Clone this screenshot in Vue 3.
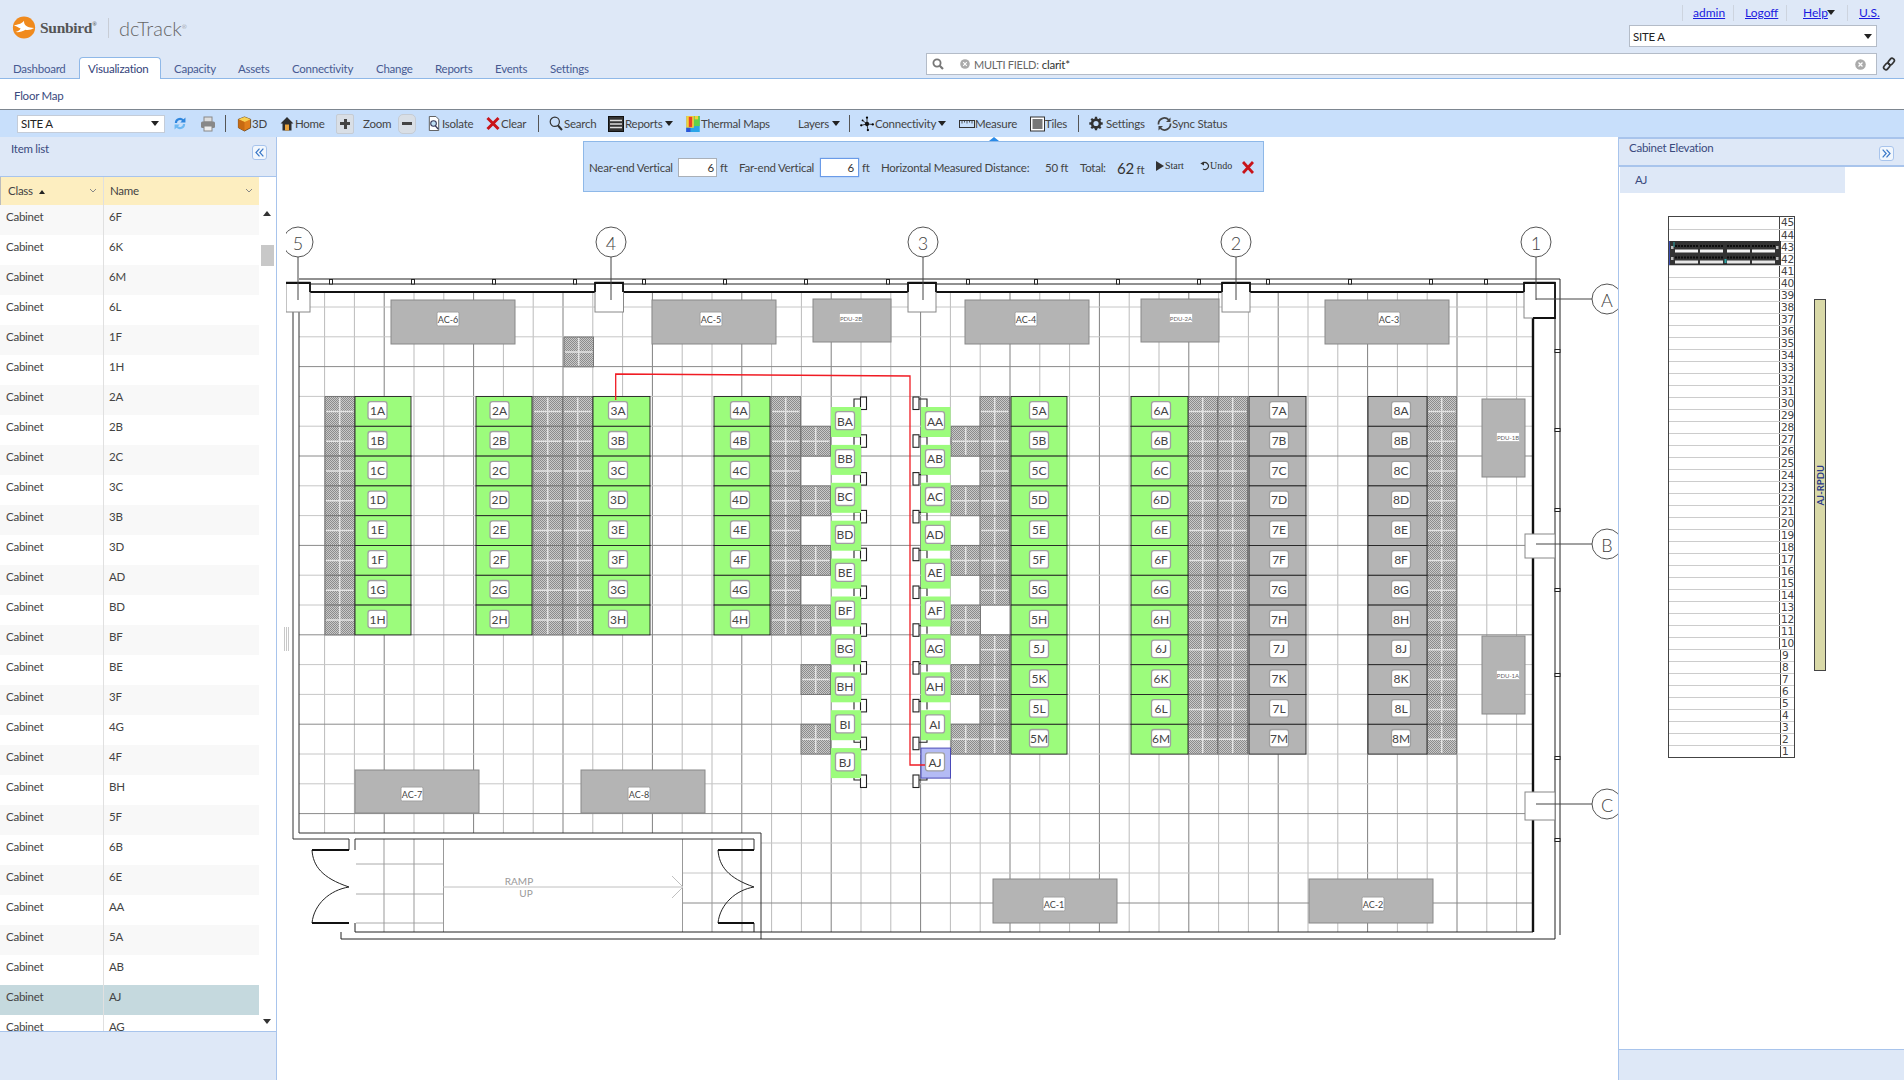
<script setup>
const tabs = ['Dashboard', 'Visualization', 'Capacity', 'Assets', 'Connectivity', 'Change', 'Reports', 'Events', 'Settings']
const items = ['6F','6K','6M','6L','1F','1H','2A','2B','2C','3C','3B','3D','AD','BD','BF','BE','3F','4G','4F','BH','5F','6B','6E','AA','5A','AB','AJ','AG']
const units = Array.from({ length: 45 }, (_, i) => 45 - i)

const vLines = []
for (let i = 0; i <= 40; i++) {
  const x = 324.6 + 29.8 * i
  vLines.push({ x, y2: x < 761 ? 833 : 932, c: i % 3 === 2 ? '#808080' : '#bbb' })
}
const hLines = []
for (let j = 0; j <= 17; j++) {
  hLines.push({ y: 307 + 29.8 * j, x1: 299, c: j % 3 === 2 ? '#8a8a8a' : '#c6c6c6' })
}
hLines.push({ y: 843, x1: 761, c: '#c6c6c6' }, { y: 873, x1: 683, c: '#c6c6c6' }, { y: 903, x1: 683, c: '#8a8a8a' })

const rowY = i => 396.5 + 29.8 * i
const all = n => Array.from({ length: n }, (_, i) => i)
const odd = [1, 3, 5, 7, 9, 11]
const tileCols = [
  [325, all(8)], [533, all(8)], [563, all(8)], [771, all(8)], [801, odd],
  [951, odd], [980, [0, 1, 2, 3, 4, 5, 6, 8, 9, 10, 11]], [1188, all(12)], [1218, all(12)], [1427, all(12)]
]
const tiles = [{ x: 564, y: 337 }]
tileCols.forEach(([x, rows]) => rows.forEach(r => tiles.push({ x, y: rowY(r) })))

const G = '#9cfc7c'
const K = '#b4b4b4'
const long = 'ABCDEFGHJKLM'
const cabinets = []
;[
  [355, 56, 377.5, '1', 'ABCDEFGH', G], [476, 56, 499.5, '2', 'ABCDEFGH', G],
  [593, 57, 618, '3', 'ABCDEFGH', G], [714, 56, 740, '4', 'ABCDEFGH', G],
  [1011, 56, 1039, '5', long, G], [1131, 57, 1161, '6', long, G],
  [1249, 57, 1279, '7', long, K], [1368, 59, 1401, '8', long, K]
].forEach(([x, w, lx, p, names, fill]) => {
  ;[...names].forEach((n, i) => cabinets.push({ x, y: rowY(i), w, lx, name: p + n, fill }))
})
const shortRow = l => [...'ABCDEFGHIJ'].map((n, i) => ({ name: l + n, y: 407 + 37.9 * i }))
const bRow = shortRow('B')
const aRow = shortRow('A')
const stubs = all(11).map(i => 397 + 37.8 * i)

const blocks = [
  { x: 391, y: 300, w: 124, h: 44, lx: 448, ly: 319, t: 'AC-6' },
  { x: 652, y: 300, w: 124, h: 44, lx: 711, ly: 319, t: 'AC-5' },
  { x: 965, y: 300, w: 124, h: 44, lx: 1026, ly: 319, t: 'AC-4' },
  { x: 1325, y: 300, w: 124, h: 44, lx: 1389, ly: 319, t: 'AC-3' },
  { x: 355, y: 770, w: 124, h: 43, lx: 412, ly: 794, t: 'AC-7' },
  { x: 581, y: 770, w: 124, h: 43, lx: 639, ly: 794, t: 'AC-8' },
  { x: 993, y: 879, w: 124, h: 44, lx: 1054, ly: 904, t: 'AC-1' },
  { x: 1309, y: 879, w: 124, h: 44, lx: 1373, ly: 904, t: 'AC-2' }
]
const pdus = [
  { x: 813, y: 299, w: 78, h: 43, lx: 851, ly: 318, t: 'PDU-2B' },
  { x: 1141, y: 299, w: 78, h: 43, lx: 1181, ly: 318, t: 'PDU-2A' },
  { x: 1482, y: 399, w: 43, h: 78, lx: 1508, ly: 437, t: 'PDU-1B' },
  { x: 1482, y: 636, w: 43, h: 78, lx: 1508, ly: 675, t: 'PDU-1A' }
]
const topTicks = [331, 413, 494, 575, 644, 725, 806, 888, 968, 1036, 1118, 1199, 1268, 1350, 1431, 1486]
const sideTicks = [351, 430, 510, 590, 675, 758, 840]
const colBoxes = [
  { x: 286, y: 282, w: 24, h: 30 }, { x: 595, y: 282, w: 28.5, h: 30 },
  { x: 908, y: 282, w: 28, h: 30 }, { x: 1222, y: 282, w: 28, h: 30 },
  { x: 1524, y: 282, w: 31, h: 36 }, { x: 1525, y: 534, w: 30, h: 24 }, { x: 1525, y: 792, w: 30, h: 28 }
]
const columns = [{ x: 298, t: '5' }, { x: 611, t: '4' }, { x: 923, t: '3' }, { x: 1236, t: '2' }, { x: 1536, t: '1' }]
const rowsMarks = [{ y: 299, t: 'A' }, { y: 544, t: 'B' }, { y: 804, t: 'C' }]
const walls = ['310,292 595,292', '623,292 908,292', '936,292 1222,292', '1250,292 1524,292']
</script>

<template>
  <div class="page">
    <header class="top">
      <div class="top-left">
        <div class="brand">
          <svg class="sun" viewBox="0 0 24 24">
            <circle cx="12" cy="12" r="11.6" fill="#f08a1d" />
            <path d="M1.5 9.5C6 9 9 8.5 12 5c0 2.5.5 4 2.5 5.5 2.500 1.500 5 2 8 2-2.500 1.800-6 2.300-9 1.800-3 2-7 3-10.500 2.500 2.500-.8 4.500-2 5.500-3.800C6 12 3.500 11 1.500 9.500z" fill="#fff" />
          </svg>
          <span class="sunbird">Sunbird<sup>®</sup></span>
          <i class="brand-sep"></i>
          <span class="dctrack">dcTrack<sup>®</sup></span>
        </div>
        <nav class="tabs">
          <a v-for="t in tabs" :key="t" class="tab" :class="{ active: t === 'Visualization' }">{{ t }}</a>
        </nav>
      </div>
      <div class="top-right">
        <div class="links">
          <i class="lsep"></i><a class="lnk l1">admin</a><i class="lsep"></i><a class="lnk l2">Logoff</a><i class="lsep"></i><a class="lnk l3">Help</a><b class="caret dark"></b><i class="lsep"></i><a class="lnk l4">U.S.</a>
        </div>
        <div class="site-top"><span>SITE A</span><b class="caret dark"></b></div>
        <div class="search-row">
          <div class="search">
            <svg class="s-ico" viewBox="0 0 12 12"><circle cx="5" cy="5" r="3.600" fill="none" stroke="#777" stroke-width="1.800" /><path d="M7.700 7.700L11 11" stroke="#777" stroke-width="2.200" /></svg>
            <svg class="x-ico" viewBox="0 0 10 10"><circle cx="5" cy="5" r="4.800" fill="#aaa" /><path d="M3.200 3.200l3.600 3.600M6.800 3.200l-3.600 3.600" stroke="#fff" stroke-width="1.100" /></svg>
            <span class="mf">MULTI FIELD:</span><span class="mv">clarit*</span>
            <svg class="x-ico end" viewBox="0 0 10 10"><circle cx="5" cy="5" r="4.800" fill="#aaa" /><path d="M3.200 3.200l3.600 3.600M6.800 3.200l-3.600 3.600" stroke="#fff" stroke-width="1.100" /></svg>
          </div>
          <svg class="link-ico" viewBox="0 0 14 14"><g fill="none" stroke="#333" stroke-width="1.700"><rect x="7" y="1" width="4.500" height="7" rx="2.200" transform="rotate(40 9.200 4.500)" /><rect x="2.500" y="6" width="4.500" height="7" rx="2.200" transform="rotate(40 4.800 9.500)" /></g></svg>
        </div>
      </div>
    </header>

    <div class="subnav">Floor Map</div>

    <div class="toolbar">
      <div class="site-tool"><span>SITE A</span><b class="caret dark"></b></div>
      <div class="tool">
        <svg class="ic14" viewBox="0 0 14 16"><path d="M1.500 7.500A5.500 5.500 0 0 1 10.800 3.500L12.800 1.500V7H7.300L9.200 5.100A3.300 3.300 0 0 0 3.800 7.500z" fill="#2f86de" /><path d="M12.500 8.500A5.500 5.500 0 0 1 3.200 12.500L1.200 14.500V9H6.700L4.800 10.900A3.300 3.300 0 0 0 10.200 8.500z" fill="#6db8f2" /></svg>
      </div>
      <div class="tool">
        <svg class="ic16" viewBox="0 0 16 16"><rect x="4" y="1" width="8" height="5" fill="#ddd" stroke="#888" /><rect x="1" y="5.500" width="14" height="6.500" rx="1.500" fill="#888" /><rect x="4" y="10" width="8" height="5" fill="#eee" stroke="#888" /></svg>
      </div>
      <i class="tsep"></i>
      <div class="tool">
        <svg class="ic15" viewBox="0 0 15 17"><path d="M7.500 1L14 3.500v9L7.500 16 1 12.500v-9z" fill="#e07f1c" stroke="#5a3a10" stroke-width=".8" /><path d="M7.500 1L14 3.500 7.500 6.500 1 3.500z" fill="#f7d154" /><path d="M7.500 6.500V16L1 12.500v-9z" fill="#c76a12" /></svg>
        <span>3D</span>
      </div>
      <div class="tool">
        <svg class="ic14" viewBox="0 0 14 15"><path d="M7 1L.5 7.500H2.500V14.500H11.500V7.500H13.500z" fill="#2e2e2e" /><rect x="5" y="8.500" width="4" height="6" fill="#e9a23b" /></svg>
        <span class="sp1">Home</span>
      </div>
      <div class="zbtn"><span class="zplus"></span></div>
      <div class="tool"><span>Zoom</span></div>
      <div class="zbtn round"><span class="zminus"></span></div>
      <div class="tool">
        <svg class="ic14" viewBox="0 0 13 16"><path d="M1.500.5h7l3 3v12h-10z" fill="#fff" stroke="#555" /><circle cx="6" cy="8" r="3" fill="#bfe0f4" stroke="#335" stroke-width="1.100" /><path d="M8 10.500l3 3.500" stroke="#335" stroke-width="1.500" /></svg>
        <span class="sp1">Isolate</span>
      </div>
      <div class="tool">
        <svg class="ic14" viewBox="0 0 14 14"><path d="M1.500 1.500l11 11M12.500 1.500l-11 11" stroke="#c8141a" stroke-width="3" /></svg>
        <span class="sp1">Clear</span>
      </div>
      <i class="tsep"></i>
      <div class="tool">
        <svg class="ic14" viewBox="0 0 14 15"><circle cx="5.800" cy="5.800" r="4.600" fill="none" stroke="#333" stroke-width="1.200" /><path d="M9 9.500l4 4.500" stroke="#333" stroke-width="2" /></svg>
        <span class="sp1">Search</span>
      </div>
      <div class="tool">
        <svg class="ic16" viewBox="0 0 16 16"><rect x=".5" y=".5" width="15" height="15" fill="#333" stroke="#111" /><path d="M2 4.500h12M2 8h12M2 11.500h12" stroke="#ddd" stroke-width="1.400" /></svg>
        <span class="sp1">Reports</span><b class="caret dark cm"></b>
      </div>
      <div class="tool">
        <svg class="ic16" viewBox="0 0 16 19">
          <rect width="16" height="19" fill="#2aa5e8" /><rect x="9" width="7" height="12" fill="#5fd24a" /><rect y="0" width="9" height="14" fill="#f4d13a" /><rect x="3" y="1" width="4" height="12" fill="#e8412a" /><rect x="0" y="14" width="5" height="5" fill="#2b55d8" /><rect x="10" width="4" height="4" fill="#f4d13a" />
        </svg>
        <span>Thermal Maps</span>
      </div>
      <div class="tool"><span>Layers</span><b class="caret dark cm"></b></div>
      <i class="tsep"></i>
      <div class="tool">
        <svg class="ic16" viewBox="0 0 16 18"><path d="M8 9L8 2M8 9L1.500 10.500M8 9L14.500 9.500M8 9L9 15.500M8 9L3 5" stroke="#222" stroke-width="1" /><circle cx="8" cy="9" r="2.400" fill="#111" /><circle cx="8" cy="1.800" r="1.300" /><circle cx="1.500" cy="10.500" r="1.300" /><circle cx="14.500" cy="9.500" r="1.300" /><circle cx="9" cy="15.800" r="1.300" /><circle cx="3" cy="5" r="1" /></svg>
        <span>Connectivity</span><b class="caret dark cs"></b>
      </div>
      <div class="tool">
        <svg class="ic16" viewBox="0 0 16 8"><rect x=".5" y=".5" width="15" height="7" fill="none" stroke="#333" /><path d="M3 .5v3M5.500 .5v2M8 .5v3M10.500 .5v2M13 .5v3" stroke="#333" stroke-width=".8" /></svg>
        <span>Measure</span>
      </div>
      <div class="tool">
        <svg class="ic15" viewBox="0 0 15 15"><rect x=".5" y=".5" width="14" height="14" fill="#fff" stroke="#333" /><rect x="2.500" y="2.500" width="10" height="10" fill="url(#tilefill)" /><defs><pattern id="tilefill" width="2" height="2" patternUnits="userSpaceOnUse"><rect width="2" height="2" fill="#aaa" /><rect width="1" height="1" fill="#444" /><rect x="1" y="1" width="1" height="1" fill="#444" /></pattern></defs></svg>
        <span>Tiles</span>
      </div>
      <i class="tsep"></i>
      <div class="tool">
        <svg class="ic14" viewBox="0 0 14 14"><circle cx="7" cy="7" r="3.900" fill="none" stroke="#333" stroke-width="2.600" /><path d="M7 .3v2.500M7 11.200v2.500M.3 7h2.500M11.200 7h2.500M2.300 2.300l1.700 1.700M10 10l1.700 1.700M11.700 2.300L10 4M4 10l-1.700 1.700" stroke="#333" stroke-width="2.300" /></svg>
        <span class="sp2">Settings</span>
      </div>
      <div class="tool">
        <svg class="ic15" viewBox="0 0 15 15"><path d="M1.500 8a6 6 0 0 1 10.200-4.700" fill="none" stroke="#444" stroke-width="1.700" /><path d="M13.500 1v4.500H9z" fill="#444" /><path d="M13.500 7a6 6 0 0 1-10.200 4.700" fill="none" stroke="#444" stroke-width="1.700" /><path d="M1.500 14V9.500H6z" fill="#444" /></svg>
        <span>Sync Status</span>
      </div>
    </div>

    <main class="main">
      <aside class="left">
        <div class="panel-head">
          <span>Item list</span>
          <button class="collapse"><svg viewBox="0 0 10 10"><path d="M5 1.500L1.800 5 5 8.500M8.500 1.500L5.300 5l3.200 3.500" fill="none" stroke="#3a78c8" stroke-width="1.100" /></svg></button>
        </div>
        <div class="grid-wrap">
          <div class="grid-main">
            <div class="ghead">
              <div class="gc g1">Class <b class="up"></b><svg class="chev" viewBox="0 0 8 5"><path d="M1 1l3 3 3-3" fill="none" stroke="#888" /></svg></div>
              <div class="gc g2">Name<svg class="chev" viewBox="0 0 8 5"><path d="M1 1l3 3 3-3" fill="none" stroke="#888" /></svg></div>
            </div>
            <div v-for="it in items" :key="it" class="grow" :class="{ sel: it === 'AJ' }">
              <div class="gc g1">Cabinet</div>
              <div class="gc g2">{{ it }}</div>
            </div>
          </div>
          <div class="sbar">
            <b class="sup"></b>
            <i class="thumb"></i>
            <b class="sdown"></b>
          </div>
        </div>
        <div class="panel-foot"></div>
      </aside>

      <div class="splitter"><i></i></div>

      <section class="canvas">
        <svg class="plan" viewBox="286 137 1332 943" width="1332" height="943">
          <defs>
            <pattern id="perf" width="2" height="2" patternUnits="userSpaceOnUse">
              <rect width="2" height="2" fill="#c8c8c8" />
              <rect width="1" height="1" fill="#8c8c8c" />
              <rect x="1" y="1" width="1" height="1" fill="#8c8c8c" />
            </pattern>
          </defs>

          <line v-for="v in vLines" :key="'v' + v.x" :x1="v.x" :x2="v.x" y1="292" :y2="v.y2" :stroke="v.c" />
          <line v-for="h in hLines" :key="'h' + h.y" :x1="h.x1" x2="1533" :y1="h.y" :y2="h.y" :stroke="h.c" />

          <g stroke="#999">
            <path d="M356 864H443M356 894H443M356 923H443" fill="none" stroke="#aaa" />
            <path d="M384 839V932M414 839V932M443.500 839V932M682.500 839V932M712 839V932M742 839V932" fill="none" />
          </g>

          <g v-for="t in tiles" :key="t.x + '-' + t.y">
            <rect :x="t.x" :y="t.y" width="29.500" height="29.800" fill="url(#perf)" stroke="#777" stroke-width="1" />
            <path :d="`M${t.x + 14.700} ${t.y + 1}v27.800M${t.x + 1} ${t.y + 14.900}h27.500`" stroke="#e4e4e4" stroke-width="1.500" />
          </g>

          <g v-for="b in blocks.concat(pdus)" :key="b.t">
            <rect :x="b.x" :y="b.y" :width="b.w" :height="b.h" fill="#b4b4b4" stroke="#888" />
          </g>

          <g v-for="c in cabinets" :key="c.name">
            <rect :x="c.x" :y="c.y" :width="c.w" height="29.800" :fill="c.fill" stroke="#222" stroke-width=".9" />
            <rect :x="c.lx - 9.500" :y="c.y + 5.200" width="19" height="17.500" rx="2.500" fill="#fff" stroke="#a0a0a0" stroke-width="1.300" />
            <text class="lab" :x="c.lx" :y="c.y + 14">{{ c.name }}</text>
          </g>

          <g v-for="y in stubs" :key="'st' + y" fill="none" stroke="#222" stroke-width="1.100">
            <rect x="860.500" :y="y" width="6" height="12.500" fill="#fff" />
            <rect x="913" :y="y" width="6" height="12.500" fill="#fff" />
            <path :d="y > 700 ? `M854 ${y - 2}v7h6.500` : `M854 ${y + 10}v-8h6.500`" />
            <path :d="y > 700 ? `M927 ${y - 2}v7h-8` : `M927 ${y + 10}v-8h-8`" />
          </g>

          <g v-for="c in bRow" :key="c.name">
            <rect x="831" :y="c.y" width="30" height="30" fill="#9cfc7c" />
            <rect x="835.500" :y="c.y + 4.700" width="19" height="18" rx="2.500" fill="#fff" stroke="#a0a0a0" stroke-width="1.300" />
            <text class="lab" x="845" :y="c.y + 14">{{ c.name }}</text>
          </g>
          <g v-for="c in aRow" :key="c.name">
            <rect x="921" :y="c.y" width="29.500" height="30" :fill="c.name === 'AJ' ? '#b4bbf5' : '#9cfc7c'" :stroke="c.name === 'AJ' ? '#4a4ab8' : 'none'" />
            <rect x="925.500" :y="c.y + 4.700" width="19" height="18" rx="2.500" fill="#fff" stroke="#a0a0a0" stroke-width="1.300" />
          </g>

          <g v-for="b in blocks" :key="'l' + b.t">
            <rect :x="b.lx - 11" :y="b.ly - 7" width="22" height="14" rx="1.500" fill="#fff" stroke="#a0a0a0" />
            <text class="lab small" :x="b.lx" :y="b.ly + .5">{{ b.t }}</text>
          </g>
          <g v-for="b in pdus" :key="'p' + b.t">
            <rect :x="b.lx - 11.500" :y="b.ly - 4.500" width="23" height="9" fill="#fff" stroke="#aaa" stroke-width=".6" />
            <text class="lab tiny" :x="b.lx" :y="b.ly + .3">{{ b.t }}</text>
          </g>

          <g fill="none" stroke="#222" stroke-width="1">
            <path d="M299 279H1560V935M299 284H1555V939" />
            <path d="M293 312V839H349V850M299 312V833H761V939M355 839V850M355 839H754V850" stroke="#333" />
            <path d="M341 932V939H1555M355 923V932H1533M754 923V932" />
            <path d="M312 850C313 866 322 878 349 887C330 890 314 904 312 923M718 850C719 866 728 878 754 887C736 890 720 904 718 923" />
          </g>
          <g stroke="#111" stroke-width="2" fill="none">
            <path d="M312 850H349M312 923H349M718 850H754M718 923H754" />
            <polyline v-for="w in walls" :key="w" :points="w" />
            <path d="M1533 318V932" stroke-width="2.400" />
          </g>
          <g fill="#fff" stroke="#222" stroke-width="1">
            <rect v-for="t in topTicks" :key="'t' + t" :x="t - 1.500" y="279.500" width="3" height="4.500" />
            <rect v-for="t in sideTicks" :key="'s' + t" x="1555" :y="t - 1.500" width="5" height="3" />
          </g>
          <rect v-for="b in colBoxes" :key="'b' + b.x + b.y" :x="b.x" :y="b.y" :width="b.w" :height="b.h" fill="#fff" stroke="#888" />
          <path d="M286 283H310V292M595 292V283H623V292M908 292V283H936V292M1222 292V283H1250V292M1524 292V283H1555V318H1533" fill="none" stroke="#111" stroke-width="1.800" />

          <polyline points="615.700,400 615.700,374 910,376 910,765 925,765" fill="none" stroke="#f01c24" stroke-width="1.300" />
          <g v-for="c in aRow" :key="'t' + c.name">
            <text class="lab" x="935" :y="c.y + 14">{{ c.name }}</text>
          </g>

          <g fill="none" stroke="#555">
            <g v-for="c in columns" :key="c.t">
              <circle :cx="c.x" cy="242" r="15" fill="#fff" />
              <line :x1="c.x" :x2="c.x" y1="257" y2="300" stroke="#444" />
            </g>
            <g v-for="r in rowsMarks" :key="r.t">
              <circle cx="1607" :cy="r.y" r="15" fill="#fff" />
              <line x1="1536" x2="1592" :y1="r.y" :y2="r.y" stroke="#444" />
            </g>
          </g>
          <text v-for="c in columns" :key="'c' + c.t" class="axis" :x="c.x" y="242.500">{{ c.t }}</text>
          <text v-for="r in rowsMarks" :key="'r' + r.t" class="axis" x="1607" :y="r.y + .5">{{ r.t }}</text>

          <path d="M443 887H683M672 876L683 887L672 898" fill="none" stroke="#c0c0c0" />
          <text class="ramp" x="519" y="881">RAMP</text>
          <text class="ramp" x="526" y="893">UP</text>
        </svg>

        <div class="measure-tip"></div>
        <div class="measure">
          <span>Near-end Vertical</span>
          <span class="num">6</span>
          <span class="ft">ft</span>
          <span>Far-end Vertical</span>
          <span class="num focus">6</span>
          <span class="ft">ft</span>
          <span>Horizontal Measured Distance:</span>
          <span>50 ft</span>
          <span>Total:</span>
          <span><b class="big">62</b> ft</span>
          <span class="serif"><b class="play"></b>Start</span>
          <span class="serif"><svg class="undo" viewBox="0 0 10 10"><path d="M2.500 2.500A3.500 3.500 0 1 1 3 8" fill="none" stroke="#333" stroke-width="1.200" /><path d="M.3 2.500L4 .5v4z" fill="#333" /></svg>Undo</span>
          <svg class="mx" viewBox="0 0 12 13"><path d="M1 1l10 11M11 1L1 12" stroke="#c8141a" stroke-width="2.800" /></svg>
        </div>
      </section>

      <aside class="right">
        <div class="rhead">
          <span>Cabinet Elevation</span>
          <button class="collapse"><svg viewBox="0 0 10 10"><path d="M1.500 1.500L4.700 5 1.500 8.500M5 1.500L8.200 5 5 8.500" fill="none" stroke="#3a78c8" stroke-width="1.100" /></svg></button>
        </div>
        <div class="ajrow">AJ</div>
        <div class="elev">
          <div class="rack">
            <div v-for="u in units" :key="u" class="unit"><div class="slot"></div><div class="no">{{ u }}</div></div>
            <svg class="device" viewBox="0 0 112 24" width="112" height="24">
              <rect width="112" height="24" fill="#333" />
              <rect x="0" width="1" height="24" fill="#3a4cb0" />
              <g v-for="x in [6, 31, 58, 83]" :key="x">
                <rect :x="x" y="8.500" width="23" height="3" fill="#f4f4f4" />
                <rect :x="x" y="19.500" width="23" height="3" fill="#e8e8e8" />
                <path :d="`M${x} 5h23M${x} 16.500h23`" stroke="#0c0c0c" stroke-width="2" stroke-dasharray="2 1" />
              </g>
              <rect x="2" y="5" width="2.500" height="3" fill="#bbb" /><rect x="2" y="16" width="2.500" height="3" fill="#bbb" />
              <rect x="107" y="5" width="2.500" height="3" fill="#bbb" /><rect x="107" y="16" width="2.500" height="3" fill="#bbb" />
              <rect x="4.500" y="1" width="1" height="5" fill="#2aa8a8" /><rect x="55.500" y="18" width="2" height="4" fill="#2aa8a8" />
            </svg>
          </div>
          <div class="rpdu"><span>AJ-RPDU</span></div>
        </div>
        <div class="rfoot"></div>
      </aside>
    </main>
  </div>
</template>

<style>
html, body { margin: 0; overflow: hidden; background: #fff; }
</style>

<style scoped>
.page { width: 1904px; height: 1082px; font-family: Lato, "Noto Sans", sans-serif; font-size: 11.5px; letter-spacing: -.25px; color: #444; display: flex; flex-direction: column; overflow: hidden; }
.top { height: 78px; flex: none; background: #dee8f7; border-bottom: 1px solid #8fb8e8; display: flex; justify-content: space-between; }
.top-left { width: 640px; display: flex; flex-direction: column; justify-content: space-between; }
.brand { display: flex; align-items: center; padding: 16px 0 0 12px; height: 23px; }
.sun { width: 24px; height: 23px; }
.sunbird { margin-left: 4px; font: bold 15.5px "Liberation Serif", serif; color: #555; letter-spacing: -.3px; width: 68px; }
.dctrack { font: 300 20px Lato, sans-serif; letter-spacing: 0; color: #666; }
sup { font-size: 6px; vertical-align: 7px; line-height: 0; }
.brand-sep { width: 1px; height: 20px; background: #c8cdd6; margin-right: 10px; }
.tabs { display: grid; grid-template-columns: 79px 82px 64px 54px 84px 59px 60px 55px 60px; height: 21px; position: relative; top: 1px; }
.tab { padding: 3px 0 0 13px; line-height: 16px; color: #475a92; box-sizing: border-box; }
.tab.active { background: #fff; border: 1px solid #8fb8e8; border-bottom: 0; border-radius: 4px 4px 0 0; padding: 3px 0 0 8px; color: #33437a; margin-top: -1px; height: 22px; }
.top-right { width: 978px; display: flex; flex-direction: column; align-items: flex-end; padding-right: 8px; box-sizing: border-box; }
.links { display: flex; align-items: center; height: 25px; margin-right: 19px; }
.lnk { color: #1a1ae0; text-decoration: underline; font-size: 12px; letter-spacing: 0; }
.lsep { width: 1px; height: 16px; background: #cdd4df; }
.l1 { margin-left: 10px; width: 30px; margin-right: 10px; }
.l2 { margin-left: 11px; width: 30px; margin-right: 11px; }
.l3 { margin-left: 16px; width: 22px; margin-right: 2px; }
.links .caret { margin-right: 12px; }
.l4 { margin-left: 11px; width: 18px; white-space: nowrap; }
.caret { display: inline-block; width: 0; height: 0; border-left: 4px solid transparent; border-right: 4px solid transparent; border-top: 5px solid #222; }
.site-top { width: 248px; height: 22px; margin-right: 19px; background: #fff; border: 1px solid #b4bcc8; box-sizing: border-box; display: flex; align-items: center; justify-content: space-between; padding: 0 4px 0 3px; color: #222; }
.search-row { display: flex; align-items: center; margin-top: 6px; }
.search { width: 951px; height: 22px; box-sizing: border-box; background: #fff; border: 1px solid #b4bcc8; display: flex; align-items: center; padding-left: 5px; position: relative; }
.s-ico { width: 12px; height: 12px; }
.x-ico { width: 10px; height: 10px; margin-left: 16px; }
.x-ico.end { position: absolute; right: 10px; top: 5px; width: 11px; height: 11px; }
.mf { margin-left: 4px; font-size: 11px; color: #666; }
.mv { margin-left: 3px; color: #333; }
.link-ico { width: 14px; height: 14px; margin-left: 5px; }
.subnav { height: 30px; flex: none; line-height: 34px; padding-left: 14px; color: #3a4a7e; background: #fff; box-sizing: border-box; }
.toolbar { height: 28px; flex: none; box-sizing: border-box; background: #c8dffb; border-top: 1px solid #7d8690; padding-left: 17px; display: grid; align-items: center; grid-template-columns: 156px 27px 25px 12px 43px 56px 27px 35px 29px 59px 52px 11px 59px 77px 113px 51px 10px 100px 71px 48px 11px 68px 80px; }
.site-tool { width: 148px; height: 18px; background: #fff; border: 1px solid #c4ccd8; box-sizing: border-box; display: flex; align-items: center; justify-content: space-between; padding: 0 5px 0 3px; color: #222; }
.tool { display: flex; align-items: center; white-space: nowrap; }
.ic14 { width: 14px; height: 15px; flex: none; }
.ic15 { width: 15px; height: 16px; flex: none; }
.ic16 { width: 16px; height: 16px; flex: none; }
.sp1 { margin-left: 1px; }
.sp2 { margin-left: 3px; }
.cm { margin-left: 3px; }
.cs { margin-left: 2px; }
.tsep { width: 1px; height: 17px; background: #555; }
.zbtn { width: 18px; height: 20px; background: #d9dfe6; border: 1px solid #c6ccd4; box-sizing: border-box; display: flex; align-items: center; justify-content: center; border-radius: 2px; }
.zbtn.round { border-radius: 5px; }
.zplus { width: 10px; height: 10px; background: linear-gradient(#444, #444) center/10px 3px no-repeat, linear-gradient(#444, #444) center/3px 10px no-repeat; }
.zminus { width: 10px; height: 3px; background: #444; }
.main { height: 943px; flex: none; display: flex; }
.left { width: 277px; flex: none; box-sizing: border-box; border-right: 1px solid #a8c4ec; display: flex; flex-direction: column; }
.panel-head { height: 40px; flex: none; background: #dee8f7; border-bottom: 1px solid #a8c4ec; box-sizing: border-box; display: flex; justify-content: space-between; padding: 5px 9px 0 11px; color: #3a4a7e; }
.collapse { width: 15px; height: 15px; padding: 1px; background: #f2f7fd; border: 1px solid #a8c4ec; border-radius: 3px; margin-top: 3px; }
.collapse svg { display: block; width: 100%; height: 100%; }
.grid-wrap { flex: 1; display: flex; overflow: hidden; }
.grid-main { width: 259px; flex: none; overflow: hidden; }
.ghead { display: flex; height: 28px; background: #fdeec0; }
.ghead .gc { line-height: 28px; position: relative; }
.ghead .g1 { padding-left: 7px; border-left: 1px solid #bbb; }
.ghead .g2 { padding-left: 6px; }
.grow { display: flex; height: 30px; background: #fff; }
.grow:nth-child(even) { background: #f8f8f8; }
.grow.sel { background: #c5d9de; }
.gc { box-sizing: border-box; }
.g1 { width: 104px; padding-left: 6px; line-height: 23px; border-right: 1px solid #e0e0e0; }
.g2 { width: 155px; padding-left: 5px; line-height: 23px; }
.up { display: inline-block; width: 0; height: 0; border-left: 3.500px solid transparent; border-right: 3.500px solid transparent; border-bottom: 4px solid #222; margin: 0 0 1px 3px; }
.chev { position: absolute; width: 8px; height: 5px; right: 6px; top: 11px; }
.sbar { flex: 1; position: relative; background: #fff; }
.sup, .sdown { position: absolute; left: 4px; width: 0; height: 0; border-left: 4px solid transparent; border-right: 4px solid transparent; }
.sup { top: 34px; border-bottom: 5px solid #333; }
.sdown { bottom: 7px; border-top: 5px solid #333; }
.thumb { position: absolute; left: 2px; top: 68px; width: 13px; height: 21px; background: #c8c8c8; }
.panel-foot { height: 49px; flex: none; background: #dee8f7; border-top: 1px solid #a8c4ec; box-sizing: border-box; }
.splitter { width: 9px; flex: none; display: flex; align-items: center; }
.splitter i { width: 5px; height: 24px; margin: 60px 0 0 7px; flex: none; background: repeating-linear-gradient(90deg, #c8c8c8 0 1px, #fff 1px 2px); }
.canvas { width: 1332px; flex: none; position: relative; overflow: hidden; }
.plan { display: block; }
.lab { font-family: Lato, sans-serif; font-size: 12px; letter-spacing: 0; fill: #444; text-anchor: middle; dominant-baseline: central; }
.lab.small { font-size: 9px; }
.lab.tiny { font-size: 6px; fill: #666; }
.axis { font-family: Lato, sans-serif; font-weight: 300; letter-spacing: 0; font-size: 18px; fill: #444; text-anchor: middle; dominant-baseline: central; }
.ramp { font-family: Lato, sans-serif; letter-spacing: 0; font-size: 10px; fill: #999; text-anchor: middle; dominant-baseline: central; }
.measure { position: absolute; left: 297px; top: 4px; width: 681px; height: 51px; box-sizing: border-box; background: #c8dffb; border: 1px solid #8eb8e8; padding: 2px 0 0 5px; display: grid; align-items: center; grid-template-columns: 89px 39px 22px 81px 39px 22px 164px 35px 37px 39px 44px 42px 12px; white-space: nowrap; }
.measure-tip { position: absolute; left: 703px; top: 0; width: 0; height: 0; border-left: 5px solid transparent; border-right: 5px solid transparent; border-bottom: 4px solid #2a8be8; }
.num { width: 39px; height: 19px; box-sizing: border-box; background: #fff; border: 1px solid #aab0b8; text-align: right; padding-right: 2px; line-height: 17px; color: #333; }
.num.focus { border: 1px solid #6a9be8; box-shadow: 0 0 1px #6a9be8; padding-right: 4px; }
.ft { padding-left: 3px; }
.big { font-size: 15px; font-weight: 400; color: #333; }
.serif { font: 10px "Liberation Serif", serif; letter-spacing: 0; color: #333; display: flex; align-items: center; position: relative; top: -2px; }
.play { width: 0; height: 0; border-left: 8px solid #333; border-top: 5px solid transparent; border-bottom: 5px solid transparent; margin-right: 1px; }
.undo { width: 10px; height: 10px; }
.mx { width: 12px; height: 13px; }
.right { width: 286px; flex: none; box-sizing: border-box; border-left: 1px solid #a8c4ec; display: flex; flex-direction: column; }
.rhead { height: 30px; flex: none; background: #dee8f7; border-top: 2px solid #a8c4ec; border-bottom: 2px solid #a8c4ec; box-sizing: border-box; display: flex; justify-content: space-between; padding: 2px 10px 0 10px; color: #3a4a7e; }
.rhead .collapse { margin-top: 5px; }
.ajrow { width: 225px; height: 26px; flex: none; margin-left: 1px; background: #dee8f7; padding-left: 15px; line-height: 25px; color: #3a4a7e; box-sizing: border-box; }
.elev { flex: 1; display: flex; align-items: flex-start; padding: 23px 0 0 49px; }
.rack { width: 127px; position: relative; border: 1px solid #444; box-sizing: border-box; }
.unit { height: 12px; display: flex; border-top: 1px solid #ccc; box-sizing: border-box; }
.unit:first-child { border-top: 0; }
.slot { width: 111px; border-right: 1px solid #444; box-sizing: content-box; }
.no { flex: 1; font: 10.5px/11px "DejaVu Sans", sans-serif; letter-spacing: -.2px; padding-left: 1px; color: #444; }
.device { position: absolute; left: 0; top: 24px; }
.rpdu { width: 12px; height: 372px; margin: 83px 0 0 19px; box-sizing: border-box; background: #d9d9a8; border: 1px solid #444; display: flex; align-items: center; justify-content: center; }
.rpdu span { writing-mode: vertical-rl; transform: rotate(180deg); font-size: 9.5px; font-weight: 700; letter-spacing: 0; color: #2a3a8a; white-space: nowrap; }
.rfoot { height: 31px; flex: none; background: #dee8f7; border-top: 1px solid #a8c4ec; box-sizing: border-box; }
</style>
